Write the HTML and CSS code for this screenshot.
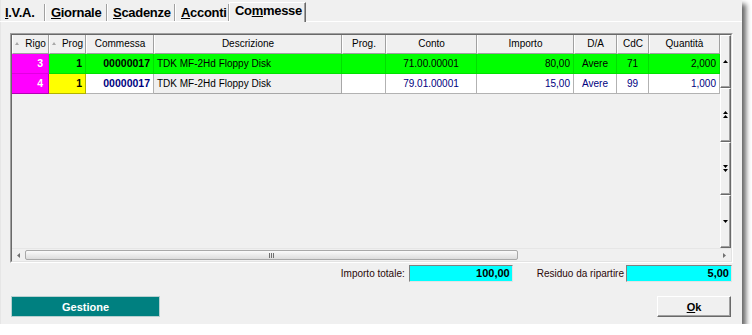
FILE: index.html
```html
<!DOCTYPE html>
<html lang="it">
<head>
    <meta charset="UTF-8">
    <title>Commesse</title>
    <link rel="stylesheet" href="styles.css">
</head>
<body>
    <div class="window">
        <div class="tabs">
            <div class="tab tab-iva"><u>I</u>.V.A.</div>
            <div class="tab tab-giornale"><u>G</u>iornale</div>
            <div class="tab tab-scadenze"><u>S</u>cadenze</div>
            <div class="tab tab-acconti"><u>A</u>cconti</div>
            <div class="tab tab-active">Co<u>m</u>messe</div>
        </div>
        <div class="panel">
            <div class="grid">
                <div class="grid-inner">
                    <div class="grid-main">
                        <div class="rows">
                            <div class="row head">
                                <div class="cell"><span class="sort"></span>Rigo</div>
                                <div class="cell"><span class="sort"></span>Prog</div>
                                <div class="cell">Commessa</div>
                                <div class="cell">Descrizione</div>
                                <div class="cell">Prog.</div>
                                <div class="cell">Conto</div>
                                <div class="cell">Importo</div>
                                <div class="cell">D/A</div>
                                <div class="cell">CdC</div>
                                <div class="cell">Quantità</div>
                            </div>
                            <div class="row data row-sel">
                                <div class="cell num bold magenta">3</div>
                                <div class="cell num bold">1</div>
                                <div class="cell num bold">00000017</div>
                                <div class="cell left">TDK MF-2Hd Floppy Disk</div>
                                <div class="cell"></div>
                                <div class="cell">71.00.00001</div>
                                <div class="cell num">80,00</div>
                                <div class="cell">Avere</div>
                                <div class="cell">71</div>
                                <div class="cell num">2,000</div>
                            </div>
                            <div class="row data row-plain">
                                <div class="cell num bold magenta">4</div>
                                <div class="cell num bold yellow">1</div>
                                <div class="cell num bold">00000017</div>
                                <div class="cell left grey">TDK MF-2Hd Floppy Disk</div>
                                <div class="cell"></div>
                                <div class="cell">79.01.00001</div>
                                <div class="cell num">15,00</div>
                                <div class="cell">Avere</div>
                                <div class="cell">99</div>
                                <div class="cell num">1,000</div>
                            </div>
                        </div>
                        <div class="vscroll">
                            <div class="vbtn"><svg width="5" height="3" viewBox="0 0 5 3"><path d="M0 3h5L2.5 0z"/></svg></div>
                            <div class="vbtn"><svg width="5" height="7" viewBox="0 0 5 7"><path d="M0 3h5L2.5 0zM0 7h5L2.5 4z"/></svg></div>
                            <div class="vbtn"><svg width="5" height="7" viewBox="0 0 5 7"><path d="M0 0h5L2.5 3zM0 4h5L2.5 7z"/></svg></div>
                            <div class="vbtn"><svg width="5" height="3" viewBox="0 0 5 3"><path d="M0 0h5L2.5 3z"/></svg></div>
                        </div>
                    </div>
                    <div class="hscroll">
                        <div class="harrow"><svg width="3" height="5" viewBox="0 0 3 5"><path d="M3 0v5L0 2.5z"/></svg></div>
                        <div class="thumb"><span class="grip"></span><span class="grip"></span><span class="grip"></span></div>
                        <div class="track"></div>
                        <div class="harrow"><svg width="3" height="5" viewBox="0 0 3 5"><path d="M0 0v5L3 2.5z"/></svg></div>
                    </div>
                </div>
            </div>
            <div class="totals">
                <span class="label">Importo totale:</span>
                <span class="field">100,00</span>
                <span class="label label-gap">Residuo da ripartire</span>
                <span class="field field-wide">5,00</span>
            </div>
            <div class="buttons">
                <button class="btn-teal">Gestione</button>
                <button class="btn-ok"><u>O</u>k</button>
            </div>
        </div>
    </div>
</body>
</html>
```

FILE: styles.css
```css
body {
    margin: 0;
    background: #fff;
    font-family: "Liberation Sans", Arial, sans-serif;
    color: #000;
}
.window {
    width: 742px;
    height: 324px;
    background: #f0f0f0;
    box-shadow: 4px 4px 5px rgba(0, 0, 0, 0.6);
    display: flex;
    flex-direction: column;
    box-sizing: border-box;
    border-left: 1px solid #e6e6e6;
}
.tabs {
    display: flex;
    align-items: flex-end;
    height: 21px;
    margin-left: -1px;
    border-bottom: 1px solid #fff;
}
.tab {
    font-size: 13px;
    font-weight: bold;
    letter-spacing: -0.3px;
    height: 17px;
    line-height: 17px;
    padding-left: 5px;
    box-sizing: border-box;
    border-left: 1px solid #fff;
    border-right: 1px solid #a0a0a0;
    white-space: nowrap;
    overflow: hidden;
}
.tab-iva {
    width: 45px;
    border-left: none;
}
.tab-giornale {
    width: 62px;
}
.tab-scadenze {
    width: 68px;
}
.tab-acconti {
    width: 54px;
}
.tab-active {
    width: 77px;
    height: 20px;
    line-height: 15px;
    margin-bottom: -1px;
    border-top: 1px solid #fff;
    border-right: 1px solid #696969;
    box-shadow: inset -1px 0 #a0a0a0;
    background: #f0f0f0;
}
.tab u {
    text-underline-offset: 1px;
}
.panel {
    flex: 1;
    padding: 11px 9px 0 9px;
    display: flex;
    flex-direction: column;
}
.grid {
    width: 723px;
    height: 230px;
    box-sizing: border-box;
    border: 1px solid;
    border-color: #a0a0a0 #fff #fff #a0a0a0;
}
.grid-inner {
    height: 100%;
    box-sizing: border-box;
    border: 1px solid;
    border-color: #696969 #e3e3e3 #e3e3e3 #696969;
    display: flex;
    flex-direction: column;
}
.grid-main {
    flex: 1;
    display: flex;
    min-height: 0;
}
.rows {
    flex: 1;
}
.row {
    display: grid;
    grid-template-columns: 37px 37px 68px 188px 44px 91px 97px 43px 32px 71px;
    font-size: 10px;
}
.cell {
    box-sizing: border-box;
    white-space: nowrap;
    overflow: hidden;
    text-align: center;
}
.head .cell {
    height: 19px;
    line-height: 18px;
    border-left: 1px solid #fff;
    border-right: 1px solid #a0a0a0;
    border-bottom: 1px solid #a0a0a0;
    background: #f0f0f0;
}
.sort {
    display: inline-block;
    width: 0;
    height: 0;
    border-left: 2px solid transparent;
    border-right: 2px solid transparent;
    border-bottom: 3px solid #a8a8a8;
    margin: 0 6px 1px 0;
    vertical-align: middle;
}
.data .cell {
    height: 20px;
    line-height: 19px;
    border-right: 1px solid rgba(0, 0, 0, 0.3);
    border-bottom: 1px solid rgba(0, 0, 0, 0.3);
}
.row-sel .cell {
    background: #00ff00;
    border-color: rgba(0, 0, 0, 0.12);
}
.row-plain .cell {
    background: #fff;
    color: #000080;
}
.data .num {
    text-align: right;
    padding-right: 3px;
}
.data .left {
    text-align: left;
    padding-left: 3px;
}
.bold {
    font-weight: bold;
    font-size: 10.5px;
}
.data .magenta {
    background: #ff00ff;
    color: #fff;
    padding-right: 5px;
}
.data .yellow {
    background: #ffff00;
    color: #000;
}
.data .grey {
    background: #f0f0f0;
    color: #000;
}
.vscroll {
    width: 11px;
    display: flex;
    flex-direction: column;
}
.vbtn {
    flex: 1;
    display: flex;
    align-items: center;
    justify-content: center;
    border: 1px solid;
    border-color: #fff #696969 #696969 #fff;
    box-shadow: inset -1px -1px #a0a0a0;
    background: #f0f0f0;
}
.vbtn svg {
    fill: #000;
}
.hscroll {
    height: 13px;
    display: flex;
    align-items: center;
    border-top: 1px solid #e6e6e6;
    box-sizing: border-box;
}
.harrow {
    width: 13px;
    display: flex;
    justify-content: center;
}
.harrow svg {
    fill: #707070;
}
.thumb {
    width: 493px;
    height: 10px;
    box-sizing: border-box;
    border: 1px solid #a8a8a8;
    border-radius: 2px;
    background: linear-gradient(#fafafa, #dcdcdc);
    display: flex;
    justify-content: center;
    align-items: center;
    gap: 1px;
}
.grip {
    width: 1px;
    height: 5px;
    background: #707070;
}
.track {
    flex: 1;
}
.totals {
    display: flex;
    justify-content: flex-end;
    align-items: center;
    margin: 2px 1px 0 0;
    height: 17px;
}
.label {
    font-size: 10px;
    color: #2a0808;
    margin-right: 4px;
}
.label-gap {
    margin-left: 24px;
    margin-right: 2px;
}
.field {
    width: 104px;
    height: 17px;
    line-height: 15px;
    box-sizing: border-box;
    border: 1px solid;
    border-color: #808080 #e3e3e3 #e3e3e3 #808080;
    background: #00ffff;
    font-size: 11px;
    font-weight: bold;
    text-align: right;
    padding-right: 2px;
}
.field-wide {
    width: 106px;
}
.buttons {
    display: flex;
    justify-content: space-between;
    margin: 14px 2px 0 1px;
}
button {
    height: 21px;
    font-family: "Liberation Sans", Arial, sans-serif;
    font-size: 11px;
    font-weight: bold;
    padding: 0;
    cursor: pointer;
}
.btn-teal {
    width: 149px;
    background: #008080;
    color: #fff;
    border: 1px solid #b8d0d0;
}
.btn-ok {
    width: 74px;
    background: #f0f0f0;
    color: #000;
    border: 1px solid;
    border-color: #fff #696969 #696969 #fff;
    box-shadow: inset -1px -1px #a0a0a0;
}
```
